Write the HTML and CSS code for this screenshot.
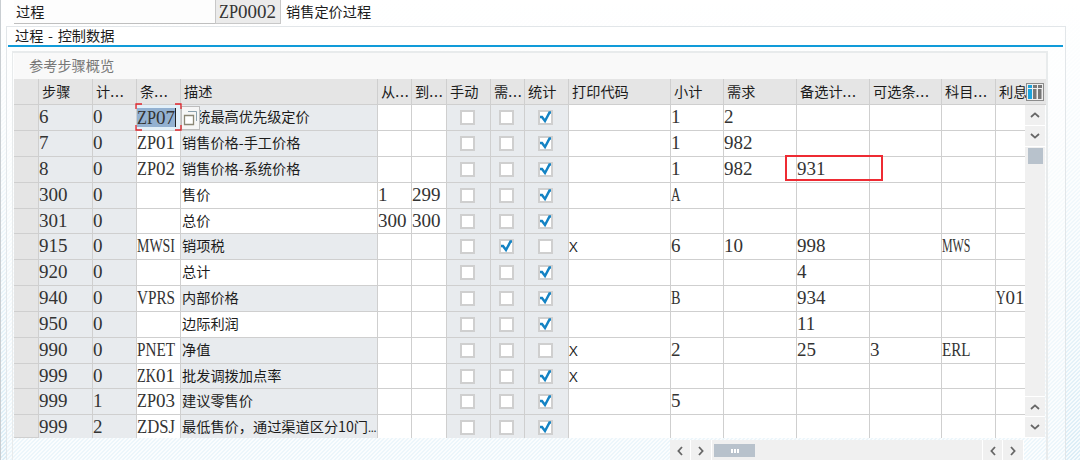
FILE: index.html
```
<!doctype html>
<html lang="zh-CN">
<head>
	<meta charset="UTF-8">
	<title>过程 - 控制数据</title>
	<link rel="stylesheet" href="styles.css">
</head>
<body>
	<div class="page">
		<div class="top-line">
			<div class="top-label">过程</div>
			<div class="top-value code">ZP0002</div>
			<div class="top-desc">销售定价过程</div>
		</div>
		<div class="panel">
			<div class="panel-title">过程 - 控制数据</div>
			<div class="overview">
				<div class="overview-title">参考步骤概览</div>
				<div class="table-area">
					<div class="table">
						<div class="row head">
							<div></div><div>步骤</div><div>计<span class="dots">...</span></div><div>条<span class="dots">...</span></div><div>描述</div><div>从<span class="dots">...</span></div><div>到<span class="dots">...</span></div><div>手动</div><div>需<span class="dots">...</span></div><div>统计</div><div>打印代码</div><div>小计</div><div>需求</div><div>备选计<span class="dots">...</span></div><div>可选条<span class="dots">...</span></div><div>科目<span class="dots">...</span></div><div>利息</div>
							<button class="config-btn">
								<svg width="14" height="14" viewBox="0 0 14 14">
									<path d="M0 0h4v3H0zM0 4h4v10H0z" fill="#1ba3dc"/>
									<path d="M5 0h4v3H5zM5 4h3.500v10H5zM10 0h4v3h-4zM10 4h3.500v10H10z" fill="#777"/>
								</svg>
							</button>
						</div>
						<div id="rows"></div>
					</div>
					<div class="vscroll">
						<div class="scroll-btn"><svg width="10" height="6" viewBox="0 0 10 6"><path d="M1 5l4-3.600L9 5"/></svg></div>
						<div class="scroll-btn"><svg width="10" height="6" viewBox="0 0 10 6"><path d="M1 1l4 3.600L9 1"/></svg></div>
						<div class="vthumb"></div>
						<div class="scroll-btn last"><svg width="10" height="6" viewBox="0 0 10 6"><path d="M1 5l4-3.600L9 5"/></svg></div>
						<div class="scroll-btn"><svg width="10" height="6" viewBox="0 0 10 6"><path d="M1 1l4 3.600L9 1"/></svg></div>
					</div>
				</div>
				<div class="hscroll">
					<div class="scroll-btn"><svg width="6" height="10" viewBox="0 0 6 10"><path d="M5 1L1.400 5 5 9"/></svg></div>
					<div class="scroll-btn"><svg width="6" height="10" viewBox="0 0 6 10"><path d="M1 1l3.600 4L1 9"/></svg></div>
					<div class="hthumb"><i></i><i></i><i></i></div>
					<div class="scroll-btn last"><svg width="6" height="10" viewBox="0 0 6 10"><path d="M5 1L1.400 5 5 9"/></svg></div>
					<div class="scroll-btn"><svg width="6" height="10" viewBox="0 0 6 10"><path d="M1 1l3.600 4L1 9"/></svg></div>
				</div>
			</div>
		</div>
	</div>
	<script src="script.js"></script>
</body>
</html>
```
FILE: styles.css
```
*{
	box-sizing: border-box;
}
body{
	margin: 0;
	width: 1080px;
	height: 460px;
	overflow: hidden;
	background-color: #fff;
	font-family: "Noto Sans CJK SC", sans-serif;
	font-size: 14.2px;
	color: #1c1c1c;
}
.page{
	height: 460px;
	padding-left: 5px;
	border-left: 1px solid #c9ced2;
	background:
		linear-gradient(180deg, #fff 0, rgba(255,255,255,0.85) 20%, rgba(255,255,255,0) 100%),
		repeating-linear-gradient(135deg, #dceef7 0, #dceef7 1.4px, #f7fbfd 1.4px, #f7fbfd 2.83px);
}
/* top line */
.top-line{
	display: flex;
	height: 26px;
	padding-left: 8px;
}
.top-label{
	width: 201px;
	height: 24px;
	padding-left: 2px;
	line-height: 23px;
	background-color: #fdfdfd;
	border-bottom: 1px solid #bfbfbf;
}
.top-value{
	width: 66px;
	height: 24px;
	padding-left: 3px;
	line-height: 22px;
	background-color: #ebebeb;
	border: 1px solid #c8c8c8;
	border-top: none;
}
.top-desc{
	padding-left: 5px;
	line-height: 23px;
}
/* panel */
.panel{
	width: 1060px;
	height: 440px;
	padding: 0 2px 0 1px;
	border: 1px solid #e2e6e9;
	background-color: rgba(255,255,255,0.45);
}
.panel-title{
	height: 20px;
	padding-left: 7px;
	line-height: 17px;
	word-spacing: 1.5px;
	background-color: #fff;
	border-bottom: 2px solid #109bd9;
}
.overview{
	width: 1036px;
	height: 415px;
	margin: 4px 0 0 4px;
	border: 2px solid #e8ebec;
	border-left-width: 1px;
	padding-left: 1px;
}
.overview-title{
	height: 26px;
	padding-left: 15px;
	line-height: 24px;
	background-color: #f9f9f9;
	color: #777;
}
.table-area{
	display: flex;
	height: 359px;
}
.table{
	width: 1010px;
	height: 359px;
}
.row{
	display: grid;
	grid-template-columns: 25px 54px 44px 44px 197px 34px 35px 44px 34px 44px 102px 53px 73px 73px 72px 54px 29px;
	grid-template-rows: 100%;
	height: 26px;
}
#rows .row:nth-child(5), #rows .row:nth-child(11){
	height: 25px;
}
#rows .row:last-child{
	height: 23px;
}
.row > div{
	border-right: 1px solid #cfcfcf;
	border-bottom: 1px solid #cfcfcf;
	background-color: #fff;
	white-space: nowrap;
}
.row > div:last-child{
	border-right: none;
}
#rows .row:last-child > div:not(.selector){
	border-bottom: none;
}
.row .gray{
	background-color: #e8ebee;
}
.row .selector{
	background-color: #e5e5e5;
}
.head{
	width: 1032px;
	grid-template-columns: 25px 54px 44px 44px 197px 34px 35px 44px 34px 44px 102px 53px 73px 73px 72px 54px 29px 22px;
	background-color: #e5e5e5;
	border-bottom: 1px solid #cfcfcf;
}
.head > div{
	padding-left: 3px;
	line-height: 25px;
	background-color: #e5e5e5;
	border-bottom: none;
}
.head > div:nth-child(17){
	border-right: none;
}
.dots{
	letter-spacing: 0.8px;
}
.config-btn{
	width: 18px;
	height: 18px;
	margin: 4px 0 0 1px;
	padding: 1px;
	border: 1px solid #8c8c8c;
	background-color: #eee;
	line-height: 0;
}
#rows{
	height: 333px;
}
.code{
	font-family: "Liberation Serif", "Noto Sans CJK SC", serif;
	font-size: 19px;
	line-height: 24px;
	color: #333;
}
.narrow{
	display: inline-block;
	transform-origin: left;
}
.desc{
	padding-left: 1px;
	line-height: 23px;
}
.desc small{
	font-size: 11px;
	letter-spacing: -0.3px;
}
.print{
	font-family: "Open Sans", sans-serif;
	line-height: 24px;
	font-size: 15px;
}
.check{
	display: flex;
	align-items: center;
	justify-content: center;
	padding-right: 2px;
}
#rows .row:last-child .check{
	padding-top: 2px;
}
.box{
	display: block;
	flex: none;
	width: 15px;
	height: 15px;
	background-color: #fff;
	border: 2px solid #cfcfcf;
}
.box svg{
	display: block;
	margin: -1px 0 0 -1px;
	overflow: visible;
}
/* active cell */
.row .active{
	position: relative;
	background-color: #e3f0f9;
}
.selected{
	display: inline-block;
	width: 39px;
	height: 19px;
	margin-top: 3px;
	line-height: 19px;
	vertical-align: top;
	background-color: #93b1d1;
	border-right: 1px solid #222;
}
.corners{
	position: absolute;
	left: -2px;
	top: -2px;
	width: 47px;
	height: 28px;
	z-index: 2;
}
.corners path{
	fill: none;
	stroke: #e0262c;
	stroke-width: 1.3;
}
.help-btn{
	position: absolute;
	left: 44px;
	top: 1px;
	width: 19px;
	height: 24px;
	z-index: 1;
	padding: 3px 1px;
	background-color: #f6f6f6;
	border: 1px solid #bdbdbd;
}
.help-btn svg{
	display: block;
}
.marked{
	position: relative;
}
.mark{
	position: absolute;
	left: -12px;
	top: -2px;
	width: 98px;
	height: 26px;
	border: 2px solid #ee2b33;
	z-index: 3;
}
/* scrollbars */
.vscroll{
	display: flex;
	flex-direction: column;
	width: 20px;
	height: 333px;
	margin: 26px 0 0 1px;
	background-color: #f0f0f0;
}
.scroll-btn{
	display: flex;
	flex: none;
	align-items: center;
	justify-content: center;
	width: 20px;
	height: 21px;
	border-bottom: 1px solid #fff;
}
.scroll-btn path{
	fill: none;
	stroke: #666;
	stroke-width: 1.8;
}
.vthumb{
	width: 15px;
	height: 16px;
	margin: 1px 0 0 3px;
	background-color: #b8c2cc;
}
.vscroll .last{
	margin-top: auto;
	border-top: 1px solid #fff;
}
.hscroll{
	display: flex;
	align-items: center;
	width: 354px;
	height: 21px;
	margin: 2px 0 0 656px;
	background-color: #f0f0f0;
}
.hscroll .scroll-btn{
	width: 21px;
	border-bottom: none;
	border-right: 1px solid #fff;
}
.hthumb{
	display: flex;
	align-items: center;
	justify-content: center;
	gap: 1px;
	width: 41px;
	height: 13px;
	margin-left: 2px;
	background-color: #b8c2cc;
}
.hthumb i{
	width: 2px;
	height: 4px;
	background-color: #fff;
}
.hscroll .last{
	margin-left: auto;
	border-left: 1px solid #fff;
}
```
FILE: script.js
```
// step, counter, condition, description, from, to, manual, required, statistical, print, subtotal, requirement, calculation, base, account, accrual
const steps = [
	['6','0','ZP07','系统最高优先级定价','','',0,0,1,'','1','2','','','',''],
	['7','0','ZP01','销售价格-手工价格','','',0,0,1,'','1','982','','','',''],
	['8','0','ZP02','销售价格-系统价格','','',0,0,1,'','1','982','931','','',''],
	['300','0','','售价','1','299',0,0,1,'','A','','','','',''],
	['301','0','','总价','300','300',0,0,1,'','','','','','',''],
	['915','0','MWSI','销项税','','',0,1,0,'X','6','10','998','','MWS',''],
	['920','0','','总计','','',0,0,1,'','','','4','','',''],
	['940','0','VPRS','内部价格','','',0,0,1,'','B','','934','','','Y01'],
	['950','0','','边际利润','','',0,0,1,'','','','11','','',''],
	['990','0','PNET','净值','','',0,0,0,'X','2','','25','3','ERL',''],
	['999','0','ZK01','批发调拨加点率','','',0,0,1,'X','','','','','',''],
	['999','1','ZP03','建议零售价','','',0,0,1,'','5','','','','',''],
	['999','2','ZDSJ','最低售价，通过渠道区分10门<small>...</small>','','',0,0,1,'','','','','','','']
];
const charWidth = 9.5;
const tick = '<svg width="13" height="13" viewBox="0 0 13 13"><path d="M1 6h2l3 4L10.500 1.500H12" fill="none" stroke="#1483c4" stroke-width="2.500"/></svg>';

function code(value){
	return value.replace(/[A-Z]+/g, '<span class="narrow">$&</span>');
}

function cell(value, index, row){
	if(index === 3){
		return '<div class="desc '+(row[2] ? 'gray' : '')+'">'+value+'</div>';
	}
	if(index >= 6 && index <= 8){
		return '<div class="check gray"><span class="box">'+(value ? tick : '')+'</span></div>';
	}
	if(index === 9){
		return '<div class="print">'+value+'</div>';
	}
	if(value === 'ZP07'){
		return '<div class="code active"><span class="selected">'+code(value)+'</span>'
			+'<svg class="corners" viewBox="0 0 47 28"><path d="M1 6V1h6M40 1h6v5M46 22v5h-6M7 27H1v-5"/></svg>'
			+'<span class="help-btn"><svg width="15" height="16" viewBox="0 0 15 16" fill="none"><path d="M5 1.500h8.500V11" stroke="#8aa0ad"/><path d="M1.500 5.500h9v9h-9z" fill="#fff" stroke="#8b8775" stroke-width="1.300"/></svg></span></div>';
	}
	if(value === '931'){
		return '<div class="code marked">'+value+'<span class="mark"></span></div>';
	}
	return '<div class="code '+(index < 2 ? 'gray' : '')+'">'+code(value)+'</div>';
}

document.getElementById('rows').innerHTML = steps.map(row =>
	'<div class="row"><div class="selector"></div>'+row.map(cell).join('')+'</div>'
).join('');

document.querySelector('.top-value').innerHTML = code('ZP0002');

// letters take the same width as digits
document.querySelectorAll('.narrow').forEach(item => {
	const natural = item.getBoundingClientRect().width;
	const wanted = item.textContent.length * charWidth;
	item.style.transform = 'scaleX('+(wanted / natural)+')';
	item.style.marginRight = (wanted - natural)+'px';
});
```
